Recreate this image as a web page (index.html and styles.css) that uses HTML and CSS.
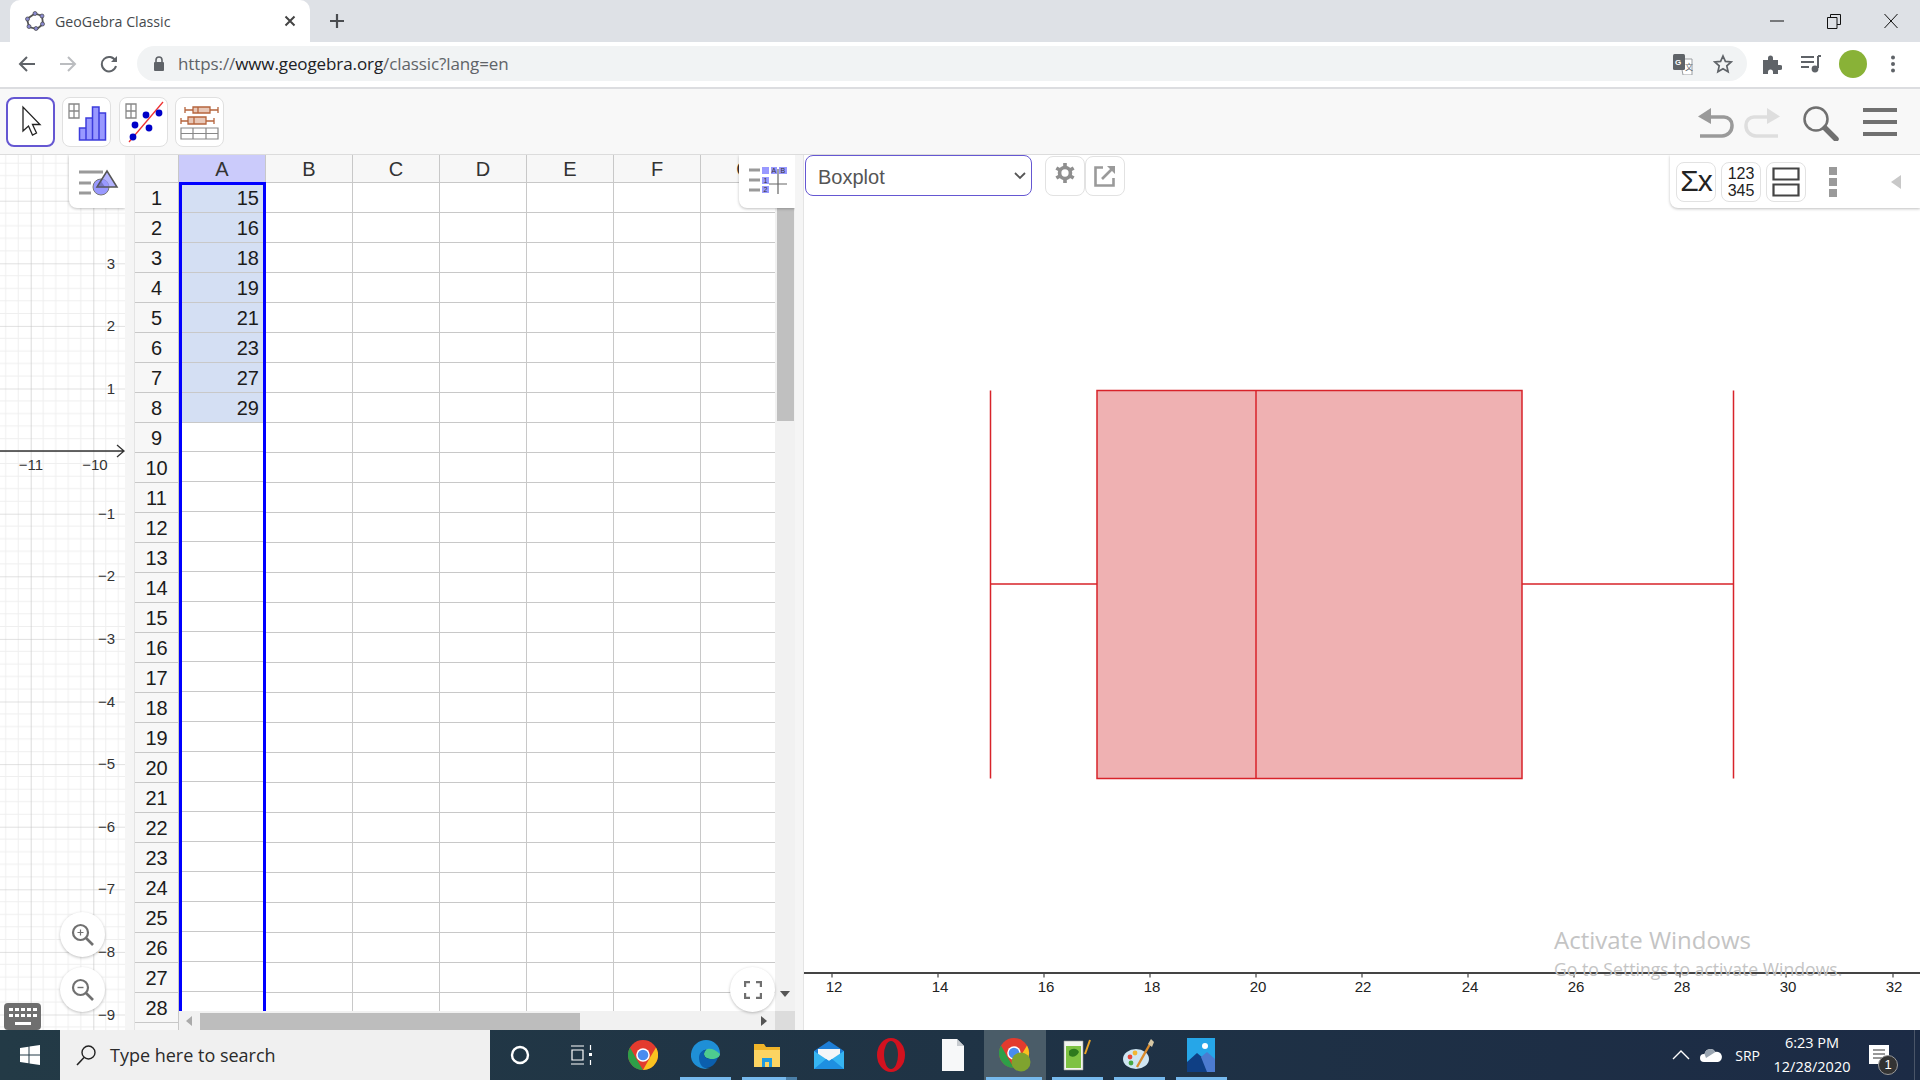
FILE: index.html
```html
<!DOCTYPE html>
<html lang="en">
<head>
    <meta charset="UTF-8">
    <title>GeoGebra Classic</title>
    <link rel="stylesheet" href="styles.css">
</head>
<body>
    <div class="tabstrip">
        <div class="tab">
            <svg class="favicon" width="20" height="20" viewBox="0 0 20 20"><path d="M10 2.500l7 2.500 1 8-6 5-8-2-2-8z" fill="none" stroke="#555" stroke-width="1.800"/><g fill="#8a8ad0" stroke="#444" stroke-width=".7"><circle cx="10" cy="2.500" r="2"/><circle cx="17" cy="5" r="2"/><circle cx="17.500" cy="13" r="2"/><circle cx="11" cy="17.500" r="2"/><circle cx="4" cy="15.500" r="2"/><circle cx="2.500" cy="8" r="2"/></g></svg>
            <span class="tab-title">GeoGebra Classic</span>
            <svg class="tab-close" width="12" height="12" viewBox="0 0 12 12"><path d="M1.500 1.500l9 9m0-9l-9 9" stroke="#444" stroke-width="2"/></svg>
        </div>
        <svg class="newtab" width="16" height="16" viewBox="0 0 16 16"><path d="M8 1v14M1 8h14" stroke="#4a4c50" stroke-width="2.200"/></svg>
        <div class="winctl">
            <svg width="14" height="14" viewBox="0 0 14 14"><path d="M0 7h14" stroke="#111" stroke-width="1"/></svg>
            <svg width="14" height="16" viewBox="0 0 14 16"><path d="M.5 4.500h9.500v11H.5zM3.500 4.500V1.500h10v10H10" fill="none" stroke="#111"/></svg>
            <svg width="14" height="16" viewBox="0 0 14 16"><path d="M.5 1l13 14m0-14L.5 15" stroke="#111" stroke-width="1"/></svg>
        </div>
    </div>

    <div class="chromebar">
        <svg class="navbtn" width="18" height="18" viewBox="0 0 18 18"><path d="M17 9H3M9 2L2 9l7 7" fill="none" stroke="#5f6368" stroke-width="2"/></svg>
        <svg class="navbtn" width="18" height="18" viewBox="0 0 18 18"><path d="M1 9h14M9 2l7 7-7 7" fill="none" stroke="#bbbdc0" stroke-width="2"/></svg>
        <svg class="navbtn" width="18" height="18" viewBox="0 0 18 18"><path d="M15.500 6A7.200 7.200 0 1 0 16 11" fill="none" stroke="#5f6368" stroke-width="2"/><path d="M17 1v6h-6z" fill="#5f6368"/></svg>
        <div class="urlbar">
            <svg class="lock" width="12" height="15" viewBox="0 0 12 15"><path d="M3 6V4a3 3 0 0 1 6 0v2" fill="none" stroke="#5f6368" stroke-width="1.600"/><rect x="1" y="6" width="10" height="9" rx="1" fill="#5f6368"/></svg>
            <span class="url"><span class="url-dim">https://</span>www.geogebra.org<span class="url-dim">/classic?lang=en</span></span>
            <svg class="translate" width="20" height="22" viewBox="0 0 20 22"><path d="M7 6h12v16H10z" fill="#fff" stroke="#9a9da1"/><rect x="0" y="1" width="12" height="16" rx="1.500" fill="#5f6368"/><text x="2" y="12" class="tr-g">G</text><text x="12" y="17" class="tr-x">文</text></svg>
            <svg class="star" width="20" height="20" viewBox="0 0 20 20"><path d="M10 2l2.400 5.400 5.800.6-4.400 3.900 1.300 5.800-5.100-3-5.100 3 1.300-5.800L1.800 8l5.800-.6z" fill="none" stroke="#5f6368" stroke-width="1.700"/></svg>
        </div>
        <svg class="ext ext-puzzle" width="20" height="20" viewBox="0 0 20 20"><path d="M1 6h5V4a2.500 2.500 0 0 1 5 0v2h5v5h2a2.500 2.500 0 0 1 0 5h-2v4h-5v-2a2.500 2.500 0 0 0-5 0v2H1z" fill="#5f6368"/></svg>
        <svg class="ext ext-media" width="20" height="18" viewBox="0 0 20 18"><path d="M0 2h13M0 7h13M0 12h8" stroke="#5f6368" stroke-width="1.800"/><path d="M17 1v12" stroke="#5f6368" stroke-width="2"/><path d="M17 1h3" stroke="#5f6368" stroke-width="2"/><circle cx="14" cy="14" r="3.400" fill="#5f6368"/></svg>
        <div class="avatar"></div>
        <svg class="ext ext-dots" width="4" height="18" viewBox="0 0 4 18"><circle cx="2" cy="2.500" r="2" fill="#5f6368"/><circle cx="2" cy="9" r="2" fill="#5f6368"/><circle cx="2" cy="15.500" r="2" fill="#5f6368"/></svg>
    </div>

    <div class="appbar">
        <div class="perspectives">
            <button class="toolbtn selected-tool">
                <svg width="45" height="46" viewBox="0 0 45 46"><path d="M15 8v24l5.500-5 4 9 4-2-4-8.500h7.500z" fill="#fff" stroke="#222" stroke-width="1.300"/></svg>
            </button>
            <button class="toolbtn">
                <svg width="47" height="48" viewBox="0 0 47 48"><path d="M6 6h10v14H6zM6 13h10M11 6v14" fill="none" stroke="#888" stroke-width="1.300"/><path d="M16.500 42V30H23v12zM23 42V20h6.500v22zM29.500 42V9H36v33zM36 42V15h6.500v27z" fill="#9999ff" stroke="#3c3cdc" stroke-width="1.500"/></svg>
            </button>
            <button class="toolbtn">
                <svg width="47" height="48" viewBox="0 0 47 48"><path d="M6 6h10v14H6zM6 13h10M11 6v14" fill="none" stroke="#888" stroke-width="1.300"/><path d="M43 4L9 44" stroke="#e33" stroke-width="1.300"/><g fill="#0000c8"><circle cx="13" cy="39" r="3.400"/><circle cx="15" cy="27" r="3.400"/><circle cx="29" cy="30" r="3.400"/><circle cx="26" cy="17" r="3.400"/><circle cx="39" cy="15" r="3.400"/></g></svg>
            </button>
            <button class="toolbtn">
                <svg width="47" height="48" viewBox="0 0 47 48"><g stroke="#b5643c" stroke-width="1.300"><path d="M9 9v6M42 9v6M9 12h33M5 20v6M38 20v6M5 23h33" fill="none"/><path d="M17 9h17v6H17zM12 19h18v7H12z" fill="#e8c8b8"/><path d="M22 9v6M18 19v7" fill="none"/></g><path d="M5 30h37v11H5zM5 35.500h37M17 30v11M30 30v11" fill="none" stroke="#888" stroke-width="1.200"/></svg>
            </button>
        </div>
        <div class="appactions">
            <svg width="36" height="31" viewBox="0 0 36 31"><path d="M2 29h22a10 10 0 0 0 10-10v-1a8 8 0 0 0-8-8H12" fill="none" stroke="#9a9a9a" stroke-width="3.500"/><path d="M13 1L0 9.500 13 17z" fill="#9a9a9a"/></svg>
            <svg width="36" height="31" viewBox="0 0 36 31"><path d="M34 29H12A10 10 0 0 1 2 19v-1a8 8 0 0 1 8-8h14" fill="none" stroke="#dedede" stroke-width="3.500"/><path d="M23 1l13 8.500L23 17z" fill="#dedede"/></svg>
            <svg class="searchicon" width="36" height="35" viewBox="0 0 36 35"><circle cx="13" cy="13" r="11.500" fill="none" stroke="#707070" stroke-width="2.500"/><path d="M22 22l11 11" stroke="#707070" stroke-width="5.500" stroke-linecap="round"/></svg>
            <svg class="menuicon" width="34" height="28" viewBox="0 0 34 28"><path d="M0 2h34M0 14h34M0 26h34" stroke="#707070" stroke-width="4"/></svg>
        </div>
    </div>

    <div class="workspace">
        <div class="graphics">
            <svg class="graph-canvas" width="125" height="875" viewBox="0 0 125 875">
                <defs>
                    <pattern id="minorgrid" patternUnits="userSpaceOnUse" x="30.700" y="45.700" width="62.600" height="62.600">
                        <path d="M12.500 0v62.600M25 0v62.600M37.600 0v62.600M50.100 0v62.600M0 12.500h62.600M0 25h62.600M0 37.600h62.600M0 50.100h62.600" stroke="#efefef" stroke-width="1"/>
                        <path d="M0 0v62.600M0 0h62.600" stroke="#c4c4c4" stroke-width="1.200"/>
                    </pattern>
                </defs>
                <rect width="125" height="875" fill="url(#minorgrid)"/>
                <path d="M0 296h124M117 290l7 6-7 6" fill="none" stroke="#333" stroke-width="1.300"/>
                <g class="axis-num" text-anchor="middle">
                    <text x="31" y="315">−11</text>
                    <text x="95" y="315">−10</text>
                </g>
                <g class="axis-num" text-anchor="end">
                    <text x="115" y="114">3</text>
                    <text x="115" y="176">2</text>
                    <text x="115" y="239">1</text>
                    <text x="115" y="364">−1</text>
                    <text x="115" y="426">−2</text>
                    <text x="115" y="489">−3</text>
                    <text x="115" y="552">−4</text>
                    <text x="115" y="614">−5</text>
                    <text x="115" y="677">−6</text>
                    <text x="115" y="739">−7</text>
                    <text x="115" y="802">−8</text>
                    <text x="115" y="865">−9</text>
                </g>
            </svg>
            <div class="stylebox graph-style">
                <svg width="46" height="34" viewBox="0 0 46 34"><path d="M0 5h24M0 16h12M0 26h12" stroke="#9a9a9a" stroke-width="3"/><circle cx="22" cy="20" r="8" fill="#9999ff" stroke="#777" stroke-width="1"/><path d="M28 4l10 16H18z" fill="#9999ff" fill-opacity=".75" stroke="#555" stroke-width="1.500"/><path d="M18 20h8l-4-6z" fill="#55558a" fill-opacity=".5"/></svg>
            </div>
            <button class="roundbtn zoom-in">
                <svg width="24" height="24" viewBox="0 0 24 24"><circle cx="9.500" cy="9.500" r="7.500" fill="none" stroke="#707070" stroke-width="2.200"/><path d="M15 15l7 7" stroke="#707070" stroke-width="2.600"/><path d="M9.500 6.500v6M6.500 9.500h6" stroke="#707070" stroke-width="1.200"/></svg>
            </button>
            <button class="roundbtn zoom-out">
                <svg width="24" height="24" viewBox="0 0 24 24"><circle cx="9.500" cy="9.500" r="7.500" fill="none" stroke="#707070" stroke-width="2.200"/><path d="M15 15l7 7" stroke="#707070" stroke-width="2.600"/><path d="M6.500 9.500h6" stroke="#707070" stroke-width="1.400"/></svg>
            </button>
            <div class="keyboard">
                <svg width="30" height="22" viewBox="0 0 30 22"><path d="M1 2h4v3H1zM7 2h4v3H7zM13 2h4v3h-4zM19 2h4v3h-4zM25 2h4v3h-4zM1 8h4v3H1zM7 8h4v3H7zM13 8h4v3h-4zM19 8h4v3h-4zM25 8h4v3h-4zM7 16h16v3H7z" fill="#fff"/></svg>
            </div>
        </div>

        <div class="gutter"></div>

        <div class="sheetpanel">
            <div class="sheet">
                <div class="colheads">
                    <div class="corner"></div>
                    <div class="colhead selected">A</div>
                    <div class="colhead">B</div>
                    <div class="colhead">C</div>
                    <div class="colhead">D</div>
                    <div class="colhead">E</div>
                    <div class="colhead">F</div>
                    <div class="colhead">G</div>
                </div>
                <div class="sheetbody">
                    <div class="rowheads">
                        <div>1</div><div>2</div><div>3</div><div>4</div><div>5</div><div>6</div><div>7</div>
                        <div>8</div><div>9</div><div>10</div><div>11</div><div>12</div><div>13</div><div>14</div>
                        <div>15</div><div>16</div><div>17</div><div>18</div><div>19</div><div>20</div><div>21</div>
                        <div>22</div><div>23</div><div>24</div><div>25</div><div>26</div><div>27</div><div>28</div>
                    </div>
                    <div class="colA">
                        <div class="filled">15</div>
                        <div class="filled">16</div>
                        <div class="filled">18</div>
                        <div class="filled">19</div>
                        <div class="filled">21</div>
                        <div class="filled">23</div>
                        <div class="filled">27</div>
                        <div class="filled">29</div>
                    </div>
                    <div class="emptycols"></div>
                </div>
            </div>
            <div class="vscroll">
                <div class="vthumb"></div>
                <svg class="vdown" width="10" height="6" viewBox="0 0 10 6"><path d="M0 0h10L5 6z" fill="#555"/></svg>
            </div>
            <div class="hscroll">
                <svg class="hleft" width="6" height="10" viewBox="0 0 6 10"><path d="M6 0v10L0 5z" fill="#aaa"/></svg>
                <div class="hthumb"></div>
                <svg class="hright" width="6" height="10" viewBox="0 0 6 10"><path d="M0 0v10l6-5z" fill="#555"/></svg>
                <div class="scrollcorner"></div>
            </div>
            <div class="stylebox sheet-style">
                <svg width="46" height="36" viewBox="0 0 46 36"><path d="M0 5h11M0 15h11M0 25h11" stroke="#9a9a9a" stroke-width="3"/><path d="M13 2h7v7h-7zM22 2h6v7h-6zM30 2h8v7h-8zM13 12h7v7h-7zM13 21h7v7h-7z" fill="#9999ff"/><path d="M29 4v25M20 19h18" stroke="#666" stroke-width="1.200"/><text x="22.500" y="8" class="tiny">A</text><text x="31.500" y="8" class="tiny">B</text><text x="14.500" y="18" class="tiny">1</text><text x="14.500" y="27" class="tiny">2</text></svg>
            </div>
            <button class="roundbtn fullscreen">
                <svg width="18" height="18" viewBox="0 0 18 18"><path d="M1 6V1h5M12 1h5v5M17 12v5h-5M6 17H1v-5" fill="none" stroke="#707070" stroke-width="2.400"/></svg>
            </button>
        </div>

        <div class="gutter gutter-right"></div>

        <div class="dataview">
            <div class="datatools">
                <div class="selectwrap">
                    <select class="plotselect">
                        <option>Boxplot</option>
                    </select>
                    <svg class="chevron" width="12" height="8" viewBox="0 0 12 8"><path d="M1 1l5 5 5-5" fill="none" stroke="#555" stroke-width="1.800"/></svg>
                </div>
                <div class="smallbtns">
                    <button class="smallbtn gearbtn">
                        <svg width="20" height="22" viewBox="0 0 22 24"><circle cx="11" cy="12" r="6" fill="none" stroke="#8f8f8f" stroke-width="4"/><path d="M11 1v5M11 18v5M1.500 6.500l4.300 2.500M16.200 15l4.300 2.500M1.500 17.500L5.800 15M16.200 9l4.300-2.500" stroke="#8f8f8f" stroke-width="4"/></svg>
                    </button>
                    <button class="smallbtn">
                        <svg width="22" height="22" viewBox="0 0 22 22"><path d="M9 2.500H1.500v18h18V13" fill="none" stroke="#9a9a9a" stroke-width="2.600"/><path d="M8 14L20 2" stroke="#9a9a9a" stroke-width="2.600"/><path d="M13 1h8v8z" fill="#9a9a9a"/></svg>
                    </button>
                </div>
            </div>
            <div class="stylebox plot-style">
                <button class="smallbtn sigma">Σx</button>
                <button class="smallbtn numbers">123<br>345</button>
                <button class="smallbtn">
                    <svg width="28" height="30" viewBox="0 0 28 30"><path d="M1.500 1.500h25v11h-25zM1.500 17.500h25v11h-25z" fill="none" stroke="#444" stroke-width="2.200"/></svg>
                </button>
                <svg class="moredots" width="8" height="30" viewBox="0 0 8 30"><path d="M0 0h8v8H0zM0 11h8v8H0zM0 22h8v8H0z" fill="#9a9a9a"/></svg>
                <svg class="collapse" width="10" height="14" viewBox="0 0 10 14"><path d="M10 0v14L0 7z" fill="#c8c8c8"/></svg>
            </div>
            <svg class="plot" width="1116" height="875" viewBox="0 0 1116 875">
                <path d="M186.500 235.500v388M929.500 235.500v388" stroke="#d8232a" stroke-width="1.500"/>
                <path d="M186.500 429H293M718 429h212" stroke="#d8232a" stroke-width="1.500"/>
                <rect x="293" y="235.500" width="425" height="388" fill="#efb1b2" stroke="#d8232a" stroke-width="1.500"/>
                <path d="M452 235.500v388" stroke="#d8232a" stroke-width="1.500"/>
                <path d="M0 818h1116" stroke="#444" stroke-width="2"/>
                <path d="M28 818v4.500M134 818v4.500M240 818v4.500M346 818v4.500M452 818v4.500M558 818v4.500M664 818v4.500M770 818v4.500M876 818v4.500M982 818v4.500M1089 818v4.500" stroke="#444" stroke-width="1.200"/>
                <g class="axis-num" text-anchor="middle">
                    <text x="30" y="837">12</text>
                    <text x="136" y="837">14</text>
                    <text x="242" y="837">16</text>
                    <text x="348" y="837">18</text>
                    <text x="454" y="837">20</text>
                    <text x="559" y="837">22</text>
                    <text x="666" y="837">24</text>
                    <text x="772" y="837">26</text>
                    <text x="878" y="837">28</text>
                    <text x="984" y="837">30</text>
                    <text x="1090" y="837">32</text>
                </g>
            </svg>
            <div class="watermark">
                <div class="wm-title">Activate Windows</div>
                <div class="wm-sub">Go to Settings to activate Windows.</div>
            </div>
        </div>
    </div>

    <div class="taskbar">
        <div class="startbtn">
            <svg width="20" height="20" viewBox="0 0 20 20"><path d="M0 3l8.500-1.200v7.700H0zM9.500 1.600L20 0v9.500H9.500zM0 10.500h8.500v7.700L0 17zM9.500 10.500H20V20L9.500 18.400z" fill="#fff"/></svg>
        </div>
        <div class="searchbox">
            <svg width="22" height="22" viewBox="0 0 22 22"><circle cx="13.500" cy="8.500" r="6.500" fill="none" stroke="#222" stroke-width="1.400"/><path d="M9 13.500L2 21" stroke="#222" stroke-width="1.600"/></svg>
            <span>Type here to search</span>
        </div>
        <div class="slot cortana"><svg width="20" height="20" viewBox="0 0 20 20"><circle cx="10" cy="10" r="8" fill="none" stroke="#fff" stroke-width="2.400"/></svg></div>
        <div class="slot taskview"><svg width="22" height="20" viewBox="0 0 22 20"><path d="M1 1h13M1 19h13M2 5h11v10H2zM20.500 0v5M20.500 15v5" fill="none" stroke="#fff" stroke-width="1.200"/><path d="M19 8h3v3h-3z" fill="#fff"/></svg></div>
        <div class="slot">
            <svg width="30" height="30" viewBox="0 0 30 30"><use href="#chromeicon"/></svg>
        </div>
        <div class="slot running">
            <svg width="30" height="30" viewBox="0 0 30 30"><path d="M1 14C2 5 9 0 16 0c8 0 14 6 14 13 0 4-3 6-7 6-5 0-7-2-7-5 0-2 2-3 2-4-3-1-8 1-8 8 0 6 4 11 10 11C8 30 0 23 1 14z" fill="#1f8fd6"/><path d="M14 14c0-6 8-8 16 0-1 4-4 5-7 5-6 0-9-2-9-5z" fill="#4ecb8f"/><path d="M9 18c0-5 3-8 7-8-1 1-2 3-2 4 0 3 3 5 8 5 2 0 4 0 6-2-2 7-7 11-12 11-4 0-7-5-7-10z" fill="#0b5fae"/></svg>
        </div>
        <div class="slot running split">
            <svg width="28" height="28" viewBox="0 0 28 28"><path d="M1 3h10l2 3h14v20H1z" fill="#f0b429"/><path d="M1 9h26v17H1z" fill="#fcd462"/><path d="M9 17h10v9H9z" fill="#1f9be0"/><path d="M12 21h4v5h-4z" fill="#fcd462"/></svg>
        </div>
        <div class="slot">
            <svg width="30" height="30" viewBox="0 0 30 30"><path d="M0 11L15 1l15 10v18H0z" fill="#1e7ed6"/><path d="M4 9h22v8l-11 6L4 17z" fill="#f4f6f8"/><path d="M0 11l15 10 15-10v18H0z" fill="#36b5f2"/><path d="M0 29l12-10 3 2 3-2 12 10z" fill="#1e8fe0"/></svg>
        </div>
        <div class="slot">
            <svg width="28" height="34" viewBox="0 0 28 34"><ellipse cx="14" cy="17" rx="14" ry="17" fill="#d2121f"/><ellipse cx="14" cy="17" rx="7" ry="14" fill="#233a45"/></svg>
        </div>
        <div class="slot">
            <svg width="22" height="32" viewBox="0 0 22 32"><path d="M0 0h15l7 7v25H0z" fill="#f7f8f9"/><path d="M15 0l7 7h-7z" fill="#c8ccd0"/></svg>
        </div>
        <div class="slot running current">
            <svg width="32" height="36" viewBox="0 0 32 36"><use href="#chromeicon" transform="translate(0 1)"/><circle cx="22" cy="25" r="9.500" fill="#7fa32f"/></svg>
        </div>
        <div class="slot running">
            <svg width="28" height="34" viewBox="0 0 28 34"><path d="M1 3h19v29H1z" fill="#f3f5ee" stroke="#999" stroke-width=".6"/><path d="M3 8h15v22H3z" fill="#7ec242"/><path d="M6 13c3-3 8-3 10 1-2 5-8 6-10 3z" fill="#2d7a1d"/><path d="M22 16l5-14" stroke="#e9a526" stroke-width="2"/></svg>
        </div>
        <div class="slot running">
            <svg width="32" height="32" viewBox="0 0 32 32"><ellipse cx="13" cy="20" rx="13" ry="10" fill="#cfe5f2"/><circle cx="7" cy="18" r="2.400" fill="#e8473c"/><circle cx="12" cy="14" r="2.400" fill="#f2b632"/><circle cx="8" cy="24" r="2.400" fill="#46a843"/><path d="M14 28L27 5" stroke="#d98a2b" stroke-width="2.400"/><path d="M25 5l3-5 3 3-2 5z" fill="#d6c7a4"/></svg>
        </div>
        <div class="slot running">
            <svg width="28" height="34" viewBox="0 0 28 34"><path d="M0 0h28v34H0z" fill="#26a6e8"/><path d="M0 34V24l10-9 18 15v4z" fill="#0f3f84"/><path d="M14 19l6-5 8 7v13H20z" fill="#4c7bd0"/><circle cx="18" cy="8" r="3" fill="#fff"/></svg>
        </div>
        <div class="tray">
            <svg class="tray-up" width="18" height="10" viewBox="0 0 18 10"><path d="M1 9l8-8 8 8" fill="none" stroke="#fff" stroke-width="1.400"/></svg>
            <svg class="tray-cloud" width="22" height="14" viewBox="0 0 22 14"><path d="M4 14a4 4 0 0 1 0-8l.5 0a6 6 0 0 1 11-2 5 5 0 0 1 2.500 10z" fill="#fff"/><path d="M4.500 6a6 6 0 0 1 11-2L6 10z" fill="#9aa5b1"/></svg>
            <span class="tray-lang">SRP</span>
            <div class="clock"><div>6:23 PM</div><div>12/28/2020</div></div>
            <div class="notify">
                <svg width="22" height="22" viewBox="0 0 22 22"><path d="M1 1h20v19H1z" fill="#fff"/><path d="M5 6h12M5 10h12M5 14h12" stroke="#333" stroke-width="1"/></svg>
                <span class="notify-count">1</span>
            </div>
        </div>
    </div>

    <svg class="icondefs" width="0" height="0">
        <defs>
            <g id="chromeicon">
                <circle cx="15" cy="15" r="15" fill="#e33b2e"/>
                <path d="M2 7.500L9 20l6 10a15 15 0 0 1-13-22.500z" fill="#2e9e48"/>
                <path d="M15 30l7-12.500L28 7.500H15l13 0A15 15 0 0 1 15 30z" fill="#f9c220"/>
                <circle cx="15" cy="15" r="6.800" fill="#fff"/>
                <circle cx="15" cy="15" r="5.300" fill="#4a8cf0"/>
            </g>
        </defs>
    </svg>
</body>
</html>
```

FILE: styles.css
```css
* {
    box-sizing: border-box;
}
html, body {
    margin: 0;
    padding: 0;
}
body {
    width: 1920px;
    height: 1080px;
    overflow: hidden;
    display: flex;
    flex-direction: column;
    font-family: "Liberation Sans", Arial, sans-serif;
    background: #fff;
}
button {
    padding: 0;
    font-family: inherit;
}

/* browser chrome */
.tabstrip {
    height: 42px;
    flex: none;
    display: flex;
    align-items: flex-end;
    background: #dee1e6;
    padding-left: 10px;
}
.tab {
    width: 300px;
    height: 42px;
    display: flex;
    align-items: center;
    background: #fff;
    border-radius: 10px 10px 0 0;
    padding: 0 14px 0 15px;
}
.favicon {
    flex: none;
}
.tab-title {
    margin-left: 10px;
    flex: 1;
    font-family: "Open Sans", sans-serif;
    font-size: 14.200px;
    color: #45494d;
}
.newtab {
    margin: 0 0 13px 19px;
}
.winctl {
    margin-left: auto;
    height: 42px;
    padding-right: 22px;
    display: flex;
    align-items: center;
    gap: 43px;
}
.chromebar {
    height: 47px;
    flex: none;
    display: flex;
    align-items: center;
    background: #fff;
    border-bottom: 2px solid #dcdde0;
    padding: 0 0 2px 18px;
}
.navbtn {
    margin-right: 23px;
}
.urlbar {
    width: 1610px;
    height: 35px;
    margin-left: -4px;
    display: flex;
    align-items: center;
    background: #f1f3f4;
    border-radius: 18px;
    padding: 0 14px 0 16px;
}
.url {
    margin-left: 13px;
    flex: 1;
    font-family: "Open Sans", sans-serif;
    font-size: 17px;
    letter-spacing: -.1px;
    color: #202124;
}
.url-dim {
    color: #5f6368;
}
.translate {
    margin-right: 20px;
}
.tr-g {
    font-size: 8px;
    font-weight: bold;
    fill: #fff;
}
.tr-x {
    font-size: 8px;
    fill: #5f6368;
    font-family: "Noto Sans CJK SC", sans-serif;
}
.ext {
    flex: none;
}
.ext-puzzle {
    margin-left: 15px;
}
.ext-media {
    margin-left: 19px;
}
.ext-dots {
    margin-left: 24px;
}
.avatar {
    width: 28px;
    height: 28px;
    border-radius: 50%;
    background: #89b237;
    margin-left: 18px;
}
.appbar {
    height: 66px;
    flex: none;
    display: flex;
    align-items: flex-start;
    justify-content: space-between;
    background: #f8f8f8;
    border-bottom: 1px solid #dcdcdc;
    padding: 8px 23px 0 6px;
}
.perspectives {
    display: flex;
    gap: 7.300px;
}
.toolbtn {
    width: 49px;
    height: 50px;
    display: flex;
    align-items: center;
    justify-content: center;
    background: #fff;
    border: 1px solid #e0e0e0;
    border-radius: 8px;
}
.selected-tool {
    border: 2px solid #6557d2;
}
.appactions {
    display: flex;
    align-items: flex-start;
    gap: 10px;
    padding-top: 10px;
}
.searchicon {
    margin: -1px 14px 0 13px;
}
.menuicon {
    margin-top: 1px;
}

/* main area */
.workspace {
    height: 875px;
    flex: none;
    display: flex;
}
.gutter {
    width: 10px;
    flex: none;
    background: #f5f5f5;
    border-right: 1px solid #e4e4e4;
}
.gutter-right {
    width: 9px;
}
.graphics {
    width: 125px;
    flex: none;
    position: relative;
    overflow: hidden;
}
.graph-canvas {
    display: block;
}
.axis-num text {
    font-size: 15px;
    fill: #222;
}
.graphics .axis-num text {
    fill: #333;
}
.stylebox {
    position: absolute;
    top: 0;
    background: #fff;
    box-shadow: 0 1px 3px rgba(0, 0, 0, .25);
    border-radius: 0 0 0 8px;
    display: flex;
    align-items: center;
}
.graph-style {
    left: 69px;
    width: 56px;
    height: 53px;
    padding: 4px 0 0 10px;
}
.roundbtn {
    position: absolute;
    width: 45px;
    height: 45px;
    display: flex;
    align-items: center;
    justify-content: center;
    background: #fff;
    border: none;
    border-radius: 50%;
    box-shadow: 0 1px 3px rgba(0, 0, 0, .25);
}
.zoom-in {
    left: 60px;
    top: 757px;
}
.zoom-out {
    left: 60px;
    top: 812px;
}
.keyboard {
    position: absolute;
    left: 4px;
    top: 848px;
    width: 37px;
    height: 27px;
    display: flex;
    align-items: center;
    justify-content: center;
    background: #6f6f6f;
    border-radius: 4px;
}
.sheetpanel {
    width: 660px;
    flex: none;
    position: relative;
    overflow: hidden;
}
.sheet {
    width: 640px;
    height: 875px;
    overflow: hidden;
    font-size: 20px;
    color: #1c1c1c;
}
.colheads {
    height: 28px;
    display: flex;
    background: #f7f7f7;
    border-bottom: 1px solid #c8c8c8;
}
.corner {
    width: 44px;
    flex: none;
    border-right: 1px solid #c8c8c8;
}
.colhead {
    width: 87px;
    flex: none;
    text-align: center;
    line-height: 28px;
    color: #333;
    border-right: 1px solid #c8c8c8;
}
.colhead.selected {
    background: #cbcbfb;
}
.sheetbody {
    display: flex;
    height: 847px;
}
.rowheads {
    width: 44px;
    flex: none;
    background: #f7f7f7;
    border-right: 1px solid #c8c8c8;
}
.rowheads div {
    height: 30px;
    line-height: 30px;
    text-align: center;
    border-bottom: 1px solid #c8c8c8;
}
.colA {
    width: 87px;
    flex: none;
    border-top: 3px solid #0000ff;
    border-left: 3px solid #0000ff;
    border-right: 3px solid #0000ff;
    margin-top: -1px;
    background: #fff;
    position: relative;
}
.colA::after {
    content: "";
    position: absolute;
    inset: 237px 0 0 0;
    background: repeating-linear-gradient(to bottom, transparent 0, transparent 29px, #c8c8c8 29px, #c8c8c8 30px);
}
.filled {
    height: 30px;
    background: #d4dff3;
    border-bottom: 1px solid #c8c8c8;
    text-align: right;
    padding-right: 4px;
    line-height: 30px;
}
.filled:first-child {
    height: 28px;
    line-height: 27px;
}
.emptycols {
    flex: 1;
    background:
        repeating-linear-gradient(to right, transparent 0, transparent 86px, #c8c8c8 86px, #c8c8c8 87px),
        repeating-linear-gradient(to bottom, transparent 0, transparent 29px, #c8c8c8 29px, #c8c8c8 30px);
}
.vscroll {
    position: absolute;
    right: 0;
    top: 0;
    width: 20px;
    height: 856px;
    background: #f1f1f1;
}
.vthumb {
    width: 17px;
    height: 266px;
    margin: 0 0 0 2px;
    background: #c0c0c0;
}
.vdown {
    position: absolute;
    left: 5px;
    bottom: 14px;
}
.hscroll {
    position: absolute;
    left: 44px;
    right: 0;
    bottom: 0;
    height: 19px;
    background: #f1f1f1;
}
.hthumb {
    position: absolute;
    left: 21px;
    top: 2px;
    width: 380px;
    height: 17px;
    background: #bdbdbd;
}
.hleft {
    position: absolute;
    left: 7px;
    top: 5px;
}
.hright {
    position: absolute;
    left: 582px;
    top: 5px;
}
.scrollcorner {
    position: absolute;
    right: 0;
    top: 0;
    width: 20px;
    height: 19px;
    background: #dcdcdc;
}
.sheet-style {
    left: 604px;
    width: 56px;
    height: 53px;
    padding: 3px 0 0 10px;
}
.tiny {
    font-size: 7px;
    fill: #333;
}
.fullscreen {
    left: 595px;
    top: 812px;
}
.dataview {
    flex: 1;
    position: relative;
    overflow: hidden;
    background: #fff;
}
.plot {
    display: block;
}
.datatools {
    position: absolute;
    left: 1px;
    top: 0;
    display: flex;
    align-items: flex-start;
    gap: 13px;
}
.selectwrap {
    position: relative;
}
.plotselect {
    display: block;
    width: 227px;
    height: 41px;
    appearance: none;
    font-family: "Liberation Sans", Arial, sans-serif;
    font-size: 20px;
    color: #555;
    background: #fff;
    border: 1px solid #6557d2;
    border-radius: 8px;
    padding: 2px 0 0 12px;
}
.chevron {
    position: absolute;
    left: 209px;
    top: 17px;
}
.smallbtns {
    display: flex;
    padding-top: 1px;
}
.smallbtn {
    width: 40px;
    height: 40px;
    display: flex;
    align-items: center;
    justify-content: center;
    background: #fff;
    border: 1px solid #e2e2e2;
    border-radius: 8px;
    color: #222;
}
.gearbtn svg {
    margin-bottom: 6px;
}
.plot-style {
    left: 866px;
    width: 250px;
    height: 53px;
    padding-left: 6px;
    gap: 5px;
}
.sigma {
    font-size: 30px;
    letter-spacing: -1px;
    padding-bottom: 2px;
}
.numbers {
    font-size: 16px;
    line-height: 17px;
}
.moredots {
    margin-left: 18px;
}
.collapse {
    margin-left: 49px;
}
.watermark {
    position: absolute;
    left: 750px;
    top: 769px;
    color: #c4c4c4;
    font-family: "Open Sans", sans-serif;
    white-space: nowrap;
}
.wm-title {
    font-size: 24px;
    line-height: 32px;
}
.wm-sub {
    font-size: 17.600px;
    line-height: 26px;
}

/* windows taskbar */
.taskbar {
    height: 50px;
    flex: none;
    display: flex;
    align-items: stretch;
    background: linear-gradient(to right, #233a46, #1f3345 50%, #1c2b45);
    color: #fff;
}
.startbtn {
    width: 60px;
    flex: none;
    display: flex;
    align-items: center;
    justify-content: center;
}
.searchbox {
    width: 430px;
    flex: none;
    display: flex;
    align-items: center;
    gap: 13px;
    background: #f0f0f0;
    padding-left: 15px;
    font-family: "Open Sans", sans-serif;
    font-size: 18px;
    color: #2a2a2a;
}
.slot {
    width: 62px;
    flex: none;
    position: relative;
    display: flex;
    align-items: center;
    justify-content: center;
}
.cortana {
    width: 60px;
}
.running::after {
    content: "";
    position: absolute;
    left: 6px;
    right: 5px;
    bottom: 0;
    height: 3px;
    background: #76b9ed;
}
.split::before {
    content: "";
    position: absolute;
    right: 1px;
    bottom: 0;
    width: 11px;
    height: 3px;
    background: #4a7fa8;
}
.split::after {
    right: 12px;
}
.current {
    background: #4a5c68;
}
.current::after {
    left: 2px;
    right: 4px;
}
.tray {
    margin-left: auto;
    display: flex;
    align-items: center;
    padding-right: 5px;
}
.tray-up {
    margin-right: 10px;
}
.tray-lang {
    margin-left: 13px;
    font-family: "Open Sans", sans-serif;
    font-size: 14px;
}
.clock {
    width: 92px;
    margin-left: 6px;
    text-align: center;
    font-family: "Open Sans", sans-serif;
    font-size: 14.500px;
    line-height: 24px;
}
.notify {
    position: relative;
    width: 47px;
    margin-left: 10px;
    height: 50px;
    display: flex;
    align-items: center;
    border-right: 1px solid #4a5568;
}
.notify-count {
    position: absolute;
    left: 10px;
    top: 25px;
    width: 20px;
    height: 20px;
    border-radius: 50%;
    background: #333;
    border: 1px solid #999;
    font-size: 13px;
    line-height: 18px;
    text-align: center;
}
.icondefs {
    position: absolute;
}
```
